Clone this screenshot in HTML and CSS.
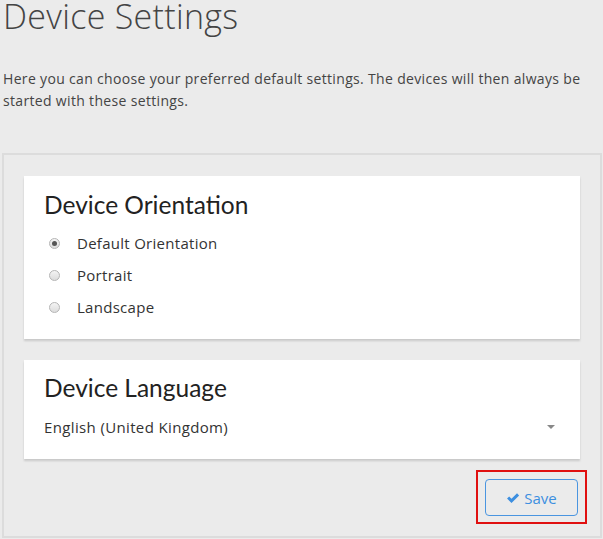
FILE: index.html
```html
<!DOCTYPE html>
<html>
<head>
<meta charset="utf-8">
<link rel="stylesheet" href="styles.css">
</head>
<body>
<div class="page">
  <h1 class="title">Device Settings</h1>
  <p class="intro">Here you can choose your preferred default settings. The devices will then always be started with these settings.</p>
  <div class="panel">
    <section class="card card-orient">
      <h2 class="card-title">Device Orientation</h2>
      <div class="radios">
        <label class="radio"><span class="dot checked"></span><span>Default Orientation</span></label>
        <label class="radio"><span class="dot"></span><span>Portrait</span></label>
        <label class="radio"><span class="dot"></span><span>Landscape</span></label>
      </div>
    </section>
    <section class="card card-lang">
      <h2 class="card-title">Device Language</h2>
      <div class="select">
        <span>English (United Kingdom)</span>
        <span class="caret"></span>
      </div>
    </section>
    <div class="actions">
      <div class="highlight">
        <button class="save">
          <svg class="check" viewBox="0 0 16 16" width="14" height="14"><path d="M1.2 8.6 L3.6 6.2 L6.3 8.9 L12.6 2.6 L15 5 L6.3 13.7 Z" fill="#3d8fe0"/></svg>
          <span>Save</span>
        </button>
      </div>
    </div>
  </div>
</div>
</body>
</html>
```
FILE: styles.css
```css
html, body {
  margin: 0;
  padding: 0;
  background: #ebebeb;
}
body {
  font-family: "Open Sans", Lato, sans-serif;
  color: #333;
  width: 603px;
  height: 539px;
  overflow: hidden;
}
.page {
  padding: 0 1px 0 2px;
}
.title {
  margin: 0;
  padding-left: 1px;
  font-size: 34px;
  font-weight: 300;
  line-height: 32px;
  letter-spacing: 0.3px;
  color: #444;
}
.intro {
  margin: 36px 0 0 0;
  padding-left: 1px;
  font-size: 14px;
  line-height: 22px;
  letter-spacing: 0.33px;
  color: #444;
}
.panel {
  margin-top: 41px;
  border: 2px solid #dcdcdc;
  padding: 21px 20px 20px 20px;
  display: flex;
  flex-direction: column;
  gap: 21px;
}
.card {
  background: #fff;
  padding: 0 20px;
  box-shadow: 0 2px 2px rgba(0,0,0,0.15);
}
.card-orient {
  height: 163px;
  box-sizing: border-box;
  padding-top: 14px;
}
.card-lang {
  height: 99px;
  box-sizing: border-box;
  padding-top: 13px;
}
.card-title {
  margin: 0;
  font-family: Lato, "Open Sans", sans-serif;
  font-size: 24.5px;
  font-weight: 400;
  line-height: 30px;
  color: #222;
}
.radios {
  display: flex;
  flex-direction: column;
  gap: 10px;
  margin-top: 12px;
}
.radio {
  display: flex;
  align-items: center;
  height: 22px;
  font-size: 15px;
  letter-spacing: 0.28px;
  color: #333;
}
.dot {
  width: 11px;
  height: 11px;
  border-radius: 50%;
  border: 1px solid #b5b5b5;
  background: linear-gradient(#f4f4f4, #dcdcdc);
  margin-left: 5px;
  margin-right: 17px;
  box-sizing: border-box;
  position: relative;
}
.dot.checked::after {
  content: "";
  position: absolute;
  left: 2px;
  top: 2px;
  width: 5px;
  height: 5px;
  border-radius: 50%;
  background: #555;
}
.select {
  display: flex;
  justify-content: space-between;
  align-items: center;
  margin-top: 13px;
  font-size: 15px;
  letter-spacing: 0.36px;
  color: #333;
  height: 22px;
}
.caret {
  width: 0;
  height: 0;
  border-left: 4px solid transparent;
  border-right: 4px solid transparent;
  border-top: 4px solid #888;
  margin-right: 5px;
}
.actions {
  display: flex;
  justify-content: flex-end;
  margin-right: 2px;
}
.highlight {
  border: 2px solid #e01010;
  padding: 7px 7px 6px 7px;
  margin-top: -10px;
  margin-right: -9px;
  margin-bottom: -8px;
}
.save {
  width: 93px;
  height: 37px;
  border: 1px solid #4a95e0;
  border-radius: 4px;
  background: #ebebeb;
  color: #3d8fe0;
  font-family: "Open Sans", Lato, sans-serif;
  font-size: 15px;
  display: flex;
  align-items: center;
  justify-content: center;
  gap: 4px;
  padding: 0;
}
.check {
  display: block;
}
```
